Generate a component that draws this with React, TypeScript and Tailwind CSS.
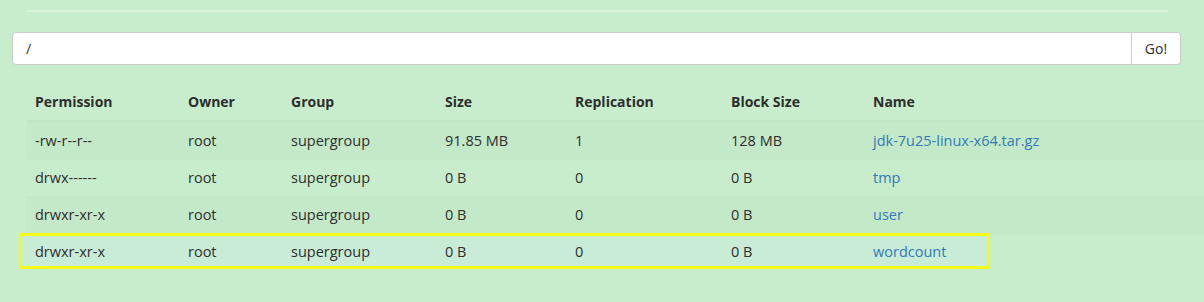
import React from 'react';

// Directory listing rows
type Entry = {
  permission: string;
  owner: string;
  group: string;
  size: string;
  replication: string;
  blockSize: string;
  name: string;
};

const entries: Entry[] = [
  { permission: '-rw-r--r--', owner: 'root', group: 'supergroup', size: '91.85 MB', replication: '1', blockSize: '128 MB', name: 'jdk-7u25-linux-x64.tar.gz' },
  { permission: 'drwx------', owner: 'root', group: 'supergroup', size: '0 B', replication: '0', blockSize: '0 B', name: 'tmp' },
  { permission: 'drwxr-xr-x', owner: 'root', group: 'supergroup', size: '0 B', replication: '0', blockSize: '0 B', name: 'user' },
  { permission: 'drwxr-xr-x', owner: 'root', group: 'supergroup', size: '0 B', replication: '0', blockSize: '0 B', name: 'wordcount' },
];

const cols = ['w-[153px]', 'w-[103px]', 'w-[154px]', 'w-[130px]', 'w-[156px]', 'w-[142px]', 'flex-1'];
const headers = ['Permission', 'Owner', 'Group', 'Size', 'Replication', 'Block Size', 'Name'];

export default function App() {
  return (
    <div
      className="h-[302px] w-full overflow-hidden bg-[#c7edcc] text-[14px] leading-5 text-[#2e2e2e]"
      style={{ fontFamily: '"Open Sans", "Noto Sans", sans-serif' }}
    >
      {/* divider */}
      <div className="pt-[10px] pl-[27px] pr-[36px]">
        <div className="h-[2px] bg-[#d9f2dc]" />
      </div>

      {/* path input */}
      <div className="mt-[20px] ml-[12px] mr-[23px] flex h-[33px]">
        <div className="flex flex-1 items-center rounded-l-[4px] border border-[#ccc] bg-white pl-[13px]">/</div>
        <div className="flex w-[49px] items-center justify-center rounded-r-[4px] border border-l-0 border-[#ccc] bg-white">Go!</div>
      </div>

      {/* listing */}
      <div className="mt-[19px] ml-[27px]">
        <div className="flex border-b-2 border-[#bfe3c4] font-bold">
          {headers.map((h, i) => (
            <div key={h} className={`${cols[i]} px-2 py-2`}>{h}</div>
          ))}
        </div>
        {entries.map((e, r) => {
          const cells = [e.permission, e.owner, e.group, e.size, e.replication, e.blockSize];
          const last = r === entries.length - 1;
          return (
            <div
              key={r}
              className={`relative flex border-t border-[#c3e6c7] ${r % 2 === 0 ? 'bg-[#c4e9c8]' : ''}`}
            >
              {last && (
                <div className="pointer-events-none absolute left-[-8px] top-[-1px] h-[36px] w-[971px] border-[3px] border-[#f7fa12] bg-[#c8ecd6]" />
              )}
              {cells.map((c, i) => (
                <div key={i} className={`relative ${cols[i]} px-2 py-2 text-[14.5px]`}>{c}</div>
              ))}
              <div className={`relative ${cols[6]} px-2 py-2 text-[14.5px]`}>
                <a className="text-[#337ab7]">{e.name}</a>
              </div>
            </div>
          );
        })}
      </div>
    </div>
  );
}
